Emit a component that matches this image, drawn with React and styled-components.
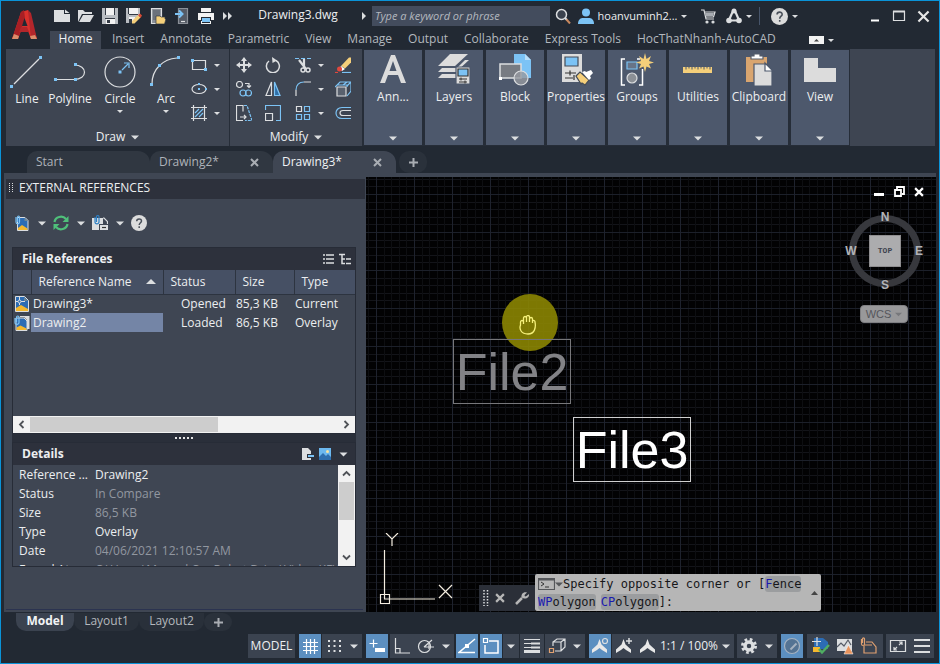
import React from "react";
import styled, { createGlobalStyle, css } from "styled-components";

const W = "#dcdee0";
const B = "#7cc3f5";
const Y = "#f5cf7a";
const DARK = "#222933";
const PANEL = "#3f4653";

const Global = createGlobalStyle`
  * { box-sizing: border-box; }
  body { margin: 0; background: ${DARK}; font: 12px/16px "Open Sans", "Noto Sans", sans-serif; color: #eceef0; }
  button, input { font: inherit; color: inherit; }
  table { border-collapse: collapse; border-spacing: 0; }
  svg { display: block; flex: none; }
`;

const Window = styled.div`
  display: flex;
  flex-direction: column;
  min-height: 100vh;
  min-width: 900px;
  border: 1px solid #0a93d8;
  background: ${DARK};
`;
const Button = styled.button`
  display: flex;
  align-items: center;
  justify-content: center;
  gap: 4px;
  flex: none;
  padding: 0;
  border: 0;
  background: none;
  white-space: nowrap;
`;

/* Icons */
const Svg = ({ s = 16, w = s, vb = 16, children }) => (
  <svg width={w} height={s} viewBox={typeof vb === "string" ? vb : `0 0 ${vb} ${vb}`} fill="none" stroke={W} strokeWidth="1.2" aria-hidden="true">
    {children}
  </svg>
);
const Caret = ({ w = 8, c = W }) => (
  <svg width={w} height="5" viewBox="0 0 8 5" aria-hidden="true"><path d="M0 0.5h8L4 4.5z" fill={c} /></svg>
);
const Small = () => <Caret w={6} />;
const Cross = ({ s = 9, c = "#a9adb3", w = 2 }) => (
  <svg width={s} height={s} viewBox="0 0 9 9" aria-hidden="true"><path d="M1 1l7 7M8 1l-7 7" stroke={c} strokeWidth={w} /></svg>
);
const Help = ({ s = 17 }) => (
  <Svg s={s}>
    <circle cx="8" cy="8" r="8" fill="#dcdcdc" stroke="none" />
    <path d="M5.7 6.2c0-3 4.8-3 4.8-.2 0 1.7-2.3 1.8-2.3 4M8.2 11.3v1.6" stroke="#4a505a" strokeWidth="1.5" />
  </Svg>
);
const DwgIcon = ({ clip }) => (
  <Svg>
    {clip ? (
      <g>
        <path d="M6 1h9.500v13H13V5l-3-3H6z" fill={W} stroke="none" />
        <path d="M2 3h8l3 3v9.500H2z" fill="#2c6cb4" strokeWidth="1" />
        <path d="M2.500 15v-2.500l4-2 6 3V15z" fill="#f4b82e" stroke="none" />
        <path d="M1 3v4.500c0 2.500 4 2.500 4 0V2.500c0-2-2.500-2-2.500 0V7" stroke={B} />
      </g>
    ) : (
      <g>
        <path d="M1.500.500h9l4 4v11h-13z" fill="#2c6cb4" strokeWidth="1" />
        <path d="M10 1v4h4z" fill="#6f8796" stroke="none" />
        <path d="M2 15v-3l5-3 7 4v2z" fill="#f4b82e" stroke="none" />
        <path d="M5.500 1v8M2 5.500h9" strokeWidth="1" />
        <circle cx="5.500" cy="5.500" r="1.500" fill="#2c6cb4" strokeWidth="1" />
      </g>
    )}
  </Svg>
);

const quick = [
  ["New", <path key="a" d="M0 2h10v4h6v8H0zM11 1.500l4.500 3.500H11z" fill={W} stroke="none" />],
  ["Open", <g key="a" stroke="none" fill={W}><path d="M0 14V2h5l2 2h7v2H4z" /><path d="M5 7h11l-4 7H1z" /></g>],
  ["Save", <g key="a" stroke="none"><path d="M0 0h16v16H0z" fill="#b9bdc2" /><path d="M3 0h10v7H3zM4 10h9v6H4z" fill="#f2f2f2" /><path d="M3 0h1v7H3zM12 0h1v7h-1zM3 10h10v1H3zM5 12h3v3H5z" fill="#333a44" /></g>],
  ["Save As", <g key="a" stroke="none"><path d="M0 0h14v8l-7 7H0z" fill="#b9bdc2" /><path d="M3 0h9v6H3zM3 9h6v5H3z" fill="#f2f2f2" /><path d="M2 0h1v6H2zM3 6h9v1H3zM3 11h3v4H3z" fill="#333a44" /><path d="M6 13l6-6 2.500 2.500-6 6H6z" fill={Y} /><path d="M12 7l2-1.500 2 2L14.500 10z" fill="#d94b35" /></g>],
  ["Open from mobile", <g key="a"><path d="M1.500.500h10v15h-10z" fill="#8a8f97" /><path d="M3 2h7v10H3z" fill="#6b717b" stroke="none" /><path d="M6 16V8h4l1 1h4v2h1l-1.500 5z" fill={Y} stroke="#333a44" strokeWidth=".7" /></g>],
  ["Save to mobile", <g key="a"><path d="M4.500.500h9v15h-9z" stroke="#8a8f97" fill="#555b66" /><path d="M7 13.500h4" /><path d="M1 6h6M5 2.500L8.500 6 5 9.500" stroke={B} strokeWidth="2" /></g>],
  ["Plot", <g key="a" stroke="none" fill="#f2f2f2"><path d="M3 0h10v4H3zM0 5h16v7h-3V9H3v3H0z" /><path d="M4 10h8v4H4z" fill={B} /><path d="M3 13h1v3H3zM12 13h1v3h-1zM4 15h8v1H4z" /></g>],
];

const draw = {
  Line: <g><path d="M4 29L29 4" /><path d="M0 30h3v3H0zM29 1h3v3h-3z" fill={B} stroke="none" /></g>,
  Polyline: <g><path d="M3 24.500h18M21 10c14 0 14 14.500 0 14.500" /><path d="M1 23h3v3H1zM21 23h3v3h-3zM21 8h3v3h-3z" fill={B} stroke="none" /></g>,
  Circle: <g><circle cx="17" cy="17" r="15" /><path d="M19 15l6-6M21 8h5v5" stroke={B} /><path d="M15.500 15.500h3v3h-3z" fill={B} stroke="none" /></g>,
  Arc: <g><path d="M3 29C3 14 14 4 28 3" /><path d="M1 28h3v3H1zM9 9h3v3H9zM28 1h3v3h-3z" fill={B} stroke="none" /></g>,
};
const drawSmall = [
  ["Rectangle", <g key="a"><path d="M1.500 3.500h13v9h-13z" /><path d="M0 2h3v3H0zM13 11h3v3h-3z" fill={B} stroke="none" /></g>],
  ["Ellipse", <g key="a"><ellipse cx="8" cy="8" rx="7" ry="4.500" /><path d="M7 2h2v2H7zM7 7h2v2H7zM14 7h2v2h-2z" fill={B} stroke="none" /></g>],
  ["Hatch", <g key="a"><path d="M2.500 0v16M13.500 0v16M0 2.500h16M0 13.500h16" /><path d="M4 8l4-4M4 12l8-8M8 12l4-4" stroke={B} /></g>],
];
const modify = [
  [["Move", <g key="a"><path d="M8 2v12M2 8h12" strokeWidth="2" /><path d="M8 0l3 4H5zM8 16l3-4H5zM0 8l4-3v6zM16 8l-4-3v6z" fill={W} stroke="none" /></g>],
   ["Rotate", <g key="a"><path d="M11 3.500A6.500 6.500 0 1 1 4 4" strokeWidth="1.500" /><path d="M7 0l5 3.500L7.500 6z" fill={W} stroke="none" /></g>],
   ["Trim", <g key="a"><path d="M0 1.500h16" stroke={B} strokeDasharray="4 2" /><path d="M4 3l7 9M9 2v9" strokeWidth="2.200" /><circle cx="13" cy="13" r="2" strokeWidth="1.500" /><circle cx="8" cy="13" r="2" strokeWidth="1.500" /></g>],
   ["Erase", <g key="a"><path d="M6 9l8-8.500h2v5l-6 6z" fill={Y} stroke="none" /><path d="M6 9l4 3-3 2-3-2z" fill="#fff" stroke="none" /><circle cx="4.500" cy="12" r="2.500" fill="#e0483e" stroke="none" /><path d="M0 15.500h3" stroke="#e0483e" /><path d="M7 15.500h9" stroke={B} /></g>]],
  [["Copy", <g key="a"><circle cx="3.500" cy="3.500" r="3" /><path d="M9 2.500h4v4M11 4.500l2 2 2-2" /><circle cx="7" cy="12" r="3" stroke={B} /><circle cx="12.500" cy="12" r="3" stroke={B} /></g>],
   ["Mirror", <g key="a"><path d="M6.500 1v13.500H1z" /><path d="M9.500 1v13.500H15z" stroke={B} fill="#2f6fa8" /></g>],
   ["Fillet", <g key="a"><path d="M1 15V9M9 1h7" /><path d="M1 9C1 4 4 1 9 1" stroke={B} /></g>],
   ["Explode", <g key="a"><path d="M2 6h9v9H2z" fill="#59616e" /><path d="M0 6l5-5h11l-4 4M12 15l4-5V2M2 4h10v2M8 4l4-3" stroke={B} /></g>]],
  [["Stretch", <g key="a"><path d="M7 15.500H.500V.500H7v6M4 12h6M8 10l2 2-2 2" /><path d="M8 .500h3l5 15H9" stroke={B} strokeDasharray="3 1" /></g>],
   ["Scale", <g key="a"><path d="M.500 5V.500h15v15H11" stroke={B} /><path d="M.500 8.500h7v7h-7z" /></g>],
   ["Array", <g key="a"><path d="M1.500 1.500h5v5h-5z" /><path d="M9.500 1.500h5v5h-5zM1.500 9.500h5v5h-5zM9.500 9.500h5v5h-5z" stroke={B} /></g>],
   ["Offset", <g key="a"><path d="M16 2.500H7c-8 0-8 11 0 11h9" stroke={B} /><path d="M16 5.500H8c-4 0-4 5 0 5h8" /></g>]],
];
const tiles = [
  ["Ann...", <path key="a" d="M5 31L16 3h4l11 28h-5l-3-8H13l-3 8zM14.500 19h7L18 9z" fill="#dcdcdc" stroke="none" />],
  ["Layers", <g key="a" stroke="none" fill="#dcdcdc"><path d="M2 14L14 2h18L19 14zM2 20l4-4h15l8-8h4L20 20zM2 26l4-4h14v4z" /><path d="M20 15h14v17H20z" stroke="#4d586c" /><path d="M22 17h10v7H22z" fill={B} stroke="#333" /><path d="M23 27h8M23 30h8M25 25.500v3M29 28.500v3" stroke="#333" strokeWidth="1" /></g>],
  ["Block", <g key="a"><path d="M17 2h11l6 6v18H17z" fill={B} stroke="none" /><path d="M28 2v6h6" fill="#b9def8" stroke="none" /><path d="M3 12h21v14H3z" fill="#777b82" strokeWidth="1.500" /><circle cx="24" cy="26" r="7" fill="#969aa0" fillOpacity=".8" /><path d="M2 25h3v3H2z" fill="#fff" stroke="none" /></g>],
  ["Properties", <g key="a"><path d="M4 2h20v28H4z" fill="#dcdcdc" stroke="none" /><path d="M7 5h13v9H7z" fill={B} stroke="#444b57" /><path d="M7 21h11M7 26h8M12 18.500v5M16 23v5" stroke="#333" /><path d="M18 24l4-4 9 8-4 5-3-2-1 1z" fill={Y} stroke="#444b57" /><path d="M24 20l3-1 1 1 5-2 2 3-3 3 1 2-2 2z" fill="#fff" stroke="none" /></g>],
  ["Groups", <g key="a"><path d="M6 7H2.500v26H6M18 7h3M20 33h3.500V17" stroke="#fff" strokeWidth="1.500" /><path d="M8 10h10v7H8z" stroke={B} fill="#687487" /><circle cx="13" cy="26" r="5" fill="#8c9096" /><path d="M26 1l1.500 6L32 4l-2 5 5 1.500-5 1.500 2 4.500-4.500-2L26 20l-1.500-5.500-4.500 2 2-4.500-5-1.500 5-1.500-2-5 4.500 3z" fill={Y} stroke="none" /></g>],
  ["Utilities", <g key="a"><path d="M3 15h29v6H3z" fill={Y} stroke="none" /><path d="M6 14.500v3M9 14.500v2M12 14.500v3M15 14.500v2M18 14.500v3M21 14.500v2M24 14.500v3M27 14.500v2M30 14.500v3" stroke="#4d586c" strokeWidth="1" /></g>],
  ["Clipboard", <g key="a" stroke="none"><path d="M5 5h21v25H5z" fill="#d9a56f" /><path d="M10 7V4h3V2h6v2h3v3z" fill="#fff" stroke="#555d6b" /><path d="M13 12h12l6 6v16H13z" fill="#dcdcdc" stroke="#4d586c" /><path d="M24 11v8h8z" fill="#fff" stroke="#4d586c" /></g>],
  ["View", <path key="a" d="M2 6h14v10h18v14H2z" fill="#dcdcdc" stroke="none" />],
];

/* Header */
const Header = styled.header`display: flex;`;
const LogoButton = styled(Button)`width: 49px; padding: 0 2px 0 0;`;
const HeaderBody = styled.div`flex: 1; min-width: 0;`;
const TitleBar = styled.div`
  display: flex;
  align-items: center;
  height: 30px;
  padding-right: 4px;
`;
const ToolButton = styled(Button)`width: ${(p) => p.$w || 24}px; height: 24px;`;
const DocTitle = styled.h1`
  flex: none; width: 120px; height: 18px; margin: 0; font-size: 12px; line-height: 16px; font-weight: 400; text-align: center;
`;
const SearchInput = styled.input`
  flex: 0 1 178px;
  min-width: 80px;
  height: 20px;
  margin: 0 2px;
  padding: 0 3px 2px;
  border: 0;
  background: #434c5d;
  font-size: 11px;
  font-style: italic;
  &::placeholder { color: #b4b8bf; opacity: 1; }
`;
const Rule = styled.span`width: 1px; height: 18px; margin: 0 6px; background: #46546a;`;
const Spacer = styled.span`flex: 1;`;
const Account = styled(Button)`width: 117px; font-size: 11px;`;
const MenuTabs = styled.nav`display: flex; height: 18px; align-items: center;`;
const MenuTab = styled(Button)`
  height: 18px;
  padding: 0 8px 2px;
  color: #b3b8be;
  ${(p) => p.$active && css`background: ${PANEL}; color: #f0f2f4; width: 51px; margin-right: 3px;`}
`;
const Collapse = styled(Button)`margin-left: 20px; width: 36px;`;

/* Ribbon */
const Ribbon = styled.section`
  display: flex;
  height: 97px;
  gap: 1px;
  margin: 0 4px 5px 5px;
  background: #262d38;
`;
const Group = styled.div`
  display: flex;
  flex-direction: column;
  flex: ${(p) => (p.$w ? "none" : 1)};
  width: ${(p) => p.$w || 0}px;
  background: #3e4552;
`;
const GroupTools = styled.div`display: flex; flex: 1; padding-top: 4px;`;
const GroupName = styled(Button)`height: 18px; gap: 6px;`;
const BigTool = styled(Button)`
  flex-direction: column;
  justify-content: flex-start;
  gap: 2px;
  width: ${(p) => p.$w}px;
  height: 64px;
  padding-top: 2px;
`;
const DrawGrid = styled.div`
  display: grid;
  grid-template: repeat(3, 24px) / 24px 12px;
  margin-left: 3px;
`;
const ModifyGrid = styled.div`
  display: grid;
  grid-template: repeat(3, 24px) / 28px 30px 30px 6px 38px;
`;
const GridButton = styled(Button)`width: 100%; height: 24px;`;
const Tiles = styled.div`display: flex; gap: 3px; padding: 1px 0 1px 1px;`;
const Tile = styled(Button)`
  flex-direction: column;
  justify-content: flex-start;
  gap: 1px;
  width: 58px;
  padding: 2px 0 4px;
  background: #4d586c;
  & > :last-child { margin-top: auto; }
`;

/* Document tabs */
const DocTabs = styled.div`
  display: flex;
  height: 26px;
  margin: 0 3px;
  padding-left: 23px;
  border-bottom: 4px solid ${PANEL};
`;
const DocTab = styled.div`
  display: flex;
  align-items: center;
  width: 123px;
  padding: 0 14px 0 9px;
  border-radius: 10px 12px 0 0;
  background: ${(p) => (p.$active ? PANEL : "#303741")};
  color: ${(p) => (p.$active ? "#f0f2f4" : "#aeb3b9")};
  & > :first-child { margin-right: auto; }
`;
const AddTab = styled(Button)`
  width: 28px;
  height: ${(p) => p.$h}px;
  margin-left: ${(p) => p.$gap || 0}px;
  border-radius: 10px;
  background: #2a313b;
`;

/* Main area */
const Main = styled.main`display: flex; flex: 1; margin: 0 3px;`;
const Dock = styled.aside`
  display: flex;
  flex-direction: column;
  width: 362px;
  flex: none;
  padding-top: 2px;
  background: ${PANEL};
`;
const DockTitle = styled.h2`
  display: flex;
  align-items: center;
  gap: 6px;
  height: 20px;
  margin: 0 1px 0 2px;
  padding: 0 0 2px 3px;
  background: #2d313c;
  font-size: 12px;
  font-weight: 400;
`;
const DockTools = styled.div`display: flex; align-items: center; height: 48px; padding-left: 6px;`;
const Box = styled.section`
  display: flex;
  flex-direction: column;
  flex: ${(p) => (p.$fill ? 1 : "none")};
  margin: 0 10px 0 8px;
  border: 1px solid #272c37;
`;
const BoxHeader = styled.div`
  display: flex;
  align-items: center;
  height: 22px;
  padding: 0 2px 0 9px;
  background: #2d313c;
`;
const BoxTitle = styled.h3`flex: 1; margin: 0; padding-bottom: 1px; font-size: 12px; font-weight: 700;`;
const RefTable = styled.table`
  width: 100%;
  table-layout: fixed;
  text-align: left;
  white-space: nowrap;
`;
const Th = styled.th`
  width: ${(p) => p.$w}px;
  height: 24px;
  padding: 0 0 0 7px;
  background: #465064;
  border-right: 1px solid #2d3440;
  border-bottom: 1px solid #2d3440;
  font-weight: 400;
  &:last-child { border-right: 0; }
`;
const SortButton = styled(Button)`width: 100%; justify-content: space-between; padding-right: 7px;`;
const Td = styled.td`
  height: 19px;
  padding: 0 0 0 ${(p) => p.$pad || 2}px;
  line-height: 16px;
  background: ${(p) => (p.$selected ? "#7485a6" : "transparent")};
`;
const HScroll = styled.div`
  display: flex;
  height: 17px;
  margin-top: auto;
  background: #f2f2f2;
`;
const VScroll = styled.div`
  display: flex;
  flex-direction: column;
  width: 17px;
  background: #f2f2f2;
`;
const ScrollButton = styled(Button)`width: 17px; height: 17px;`;
const Thumb = styled.div`
  background: #cdcdcd;
  ${(p) => (p.$vertical ? css`height: 38px; margin: 0 1px;` : css`width: 55%; margin: 1px 0;`)}
`;
const Splitter = styled.div`
  display: flex;
  align-items: center;
  justify-content: center;
  gap: 2px;
  height: 8px;
  margin: 0 10px 0 8px;
  background: #2a2f3a;
`;
const Dot = styled.i`width: 2px; height: 2px; background: #e4e4e4;`;
const DetailsBody = styled.div`display: flex; height: 101px; overflow: hidden;`;
const DetailsScroll = styled.div`flex: 1; min-width: 0; overflow: hidden;`;
const DetailsTable = styled.table`width: 100%; table-layout: fixed; text-align: left; white-space: nowrap;`;
const DetailName = styled.th`width: 76px; height: 19px; padding: 0 0 0 6px; font-weight: 400;`;
const DetailValue = styled.td`
  height: 19px; padding: 0 0 0 6px; overflow: hidden;
  color: ${(p) => (p.$muted ? "#9297a0" : "#eceef0")};
`;
const DockFoot = styled.div`height: 43px; margin: 0 3px 2px 2px; border-bottom: 1px solid #2b3350;`;

/* Drawing canvas */
const vline = (x, c) => `linear-gradient(90deg, transparent ${x}px, ${c} ${x}px ${x + 1}px, transparent ${x + 1}px)`;
const hline = (y, c) => `linear-gradient(transparent ${y}px, ${c} ${y}px ${y + 1}px, transparent ${y + 1}px)`;
const Canvas = styled.section`
  position: relative;
  flex: 1;
  min-height: 435px;
  overflow: hidden;
  background-color: #020203;
  background-image: ${[
    vline(10, "#1e222d"), hline(17, "#1c202a"),
    ...[2, 18, 25, 33].map((x) => vline(x, "#0d0e11")),
    ...[2, 9, 25, 32].map((y) => hline(y, "#131419")),
  ].join(",")};
  background-size: 38px 38px;
`;
const TextFrame = styled.div`
  position: absolute;
  left: ${(p) => p.$x}px;
  top: ${(p) => p.$y}px;
  width: 118px;
  height: 65px;
  border: 1px solid ${(p) => p.$line};
  color: ${(p) => p.$c};
  font: 52px/64px "Liberation Sans", Arial, sans-serif;
  text-align: center;
  white-space: nowrap;
`;
const PanCursor = styled.div`
  position: absolute;
  left: 136px;
  top: 117px;
  width: 56px;
  height: 57px;
  padding: 21px 0 0 17px;
  border-radius: 50%;
  background: rgba(142, 137, 2, 0.88);
`;
const ViewButtons = styled.div`position: absolute; top: 3px; right: 7px; display: flex;`;
const Compass = styled.div`
  position: absolute;
  top: 34px;
  right: 11px;
  width: 80px;
  height: 80px;
  display: grid;
  grid-template: 12px 1fr 12px / 12px 1fr 12px;
  place-items: center;
  color: #b2b3b7;
  font: bold 12px/12px "Liberation Sans", Arial, sans-serif;
  & > b:nth-of-type(1) { grid-area: 1 / 2; }
  & > b:nth-of-type(2) { grid-area: 2 / 1; }
  & > b:nth-of-type(3) { grid-area: 2 / 3; }
  & > b:nth-of-type(4) { grid-area: 3 / 2; }
  &::before {
    content: "";
    position: absolute;
    inset: 4px;
    border: 7px solid #37383d;
    border-radius: 50%;
  }
  & > * { position: relative; }
`;
const Cube = styled(Button)`
  grid-area: 2 / 2;
  width: 32px;
  height: 32px;
  border: 1px solid #8f8e90;
  background: #acacae;
  color: #3f4350;
  font: bold 8px/10px "Liberation Mono", monospace;
`;
const Wcs = styled(Button)`
  position: absolute;
  top: 128px;
  right: 28px;
  width: 48px;
  height: 18px;
  border: 1px solid #7f7f82;
  border-radius: 4px;
  background: #98989a;
  color: #55565c;
  font: 11px/14px "Liberation Sans", Arial, sans-serif;
`;
const Ucs = styled.div`position: absolute; left: 13px; bottom: 3px;`;
const Command = styled.div`
  position: absolute;
  left: 113px;
  bottom: 1px;
  display: flex;
  align-items: flex-end;
`;
const CommandTools = styled.div`
  display: flex;
  align-items: center;
  gap: 2px;
  width: 56px;
  height: 26px;
  padding: 0 4px;
  background: #2b2f38;
`;
const Prompt = styled.div`
  display: flex;
  align-items: center;
  width: 286px;
  height: 37px;
  padding: 1px 3px 0;
  border-radius: 2px;
  background: #b6b6b6;
  color: #17171a;
  font: 12px/18px "DejaVu Sans Mono", monospace;
  white-space: nowrap;
`;
const PromptText = styled.div`flex: 1;`;
const PromptRow = styled.div`display: flex; align-items: center;`;
const Option = styled(Button)`
  display: inline-block;
  margin-right: ${(p) => (p.$gap ? 5 : 0)}px;
  border-radius: 3px;
  background: #9b9d9f;
  line-height: 16px;
  & > b { font-weight: 400; color: #1a1ab0; }
`;

/* Footer */
const Footer = styled.footer`padding: 1px 4px 5px;`;
const LayoutTabs = styled.div`display: flex; height: 19px; padding-left: 11px;`;
const LayoutTab = styled(Button)`
  height: 18px;
  width: ${(p) => (p.$active ? 58 : 65)}px;
  padding-bottom: 2px;
  border-radius: 0 0 10px 10px;
  background: ${(p) => (p.$active ? "#3b4350" : "#29303a")};
  color: ${(p) => (p.$active ? "#f2f4f5" : "#b4b8bd")};
  font-weight: ${(p) => (p.$active ? 700 : 400)};
`;
const StatusBar = styled.div`
  display: flex;
  justify-content: flex-end;
  gap: 3px;
  height: 24px;
  margin-top: 2px;
  padding-right: 1px;
`;
const StatusSet = styled.div`display: flex; gap: 1px;`;
const StatusGroup = styled.div`display: flex; background: #3b4350; padding: 0 ${(p) => p.$pad || 0}px;`;
const StatusButton = styled(Button)`
  width: ${(p) => p.$w || 24}px;
  height: 24px;
  border: solid transparent;
  border-width: 0 1px;
  background: ${(p) => (p.$on ? "#5c8fc0" : "transparent")};
  ${(p) => p.$on && css`border-color: ${DARK};`}
`;
const MenuButton = styled(Button)`width: ${(p) => p.$w || 16}px; height: 24px;`;

const Status = ({ label, on, menu, w, children }) => (
  <>
    <StatusButton aria-label={label} aria-pressed={!!on} $on={on} $w={w}>
      <Svg s={18} vb={18}>{children}</Svg>
    </StatusButton>
    {menu && <MenuButton aria-label={`${label} options`}><Caret /></MenuButton>}
  </>
);
const scaleMan = <path d="M8.500 2l2 5.500 5.500 5V16l-5-3-2.500-2L6 13l-5 3v-3.500l5.500-5z" fill="#e8e8e8" stroke="none" />;

const references = [
  { name: "Drawing3*", status: "Opened", size: "85,3 KB", type: "Current" },
  { name: "Drawing2", status: "Loaded", size: "86,5 KB", type: "Overlay", selected: true },
];
const details = [
  ["Reference ...", "Drawing2"],
  ["Status", "In Compare", true],
  ["Size", "86,5 KB", true],
  ["Type", "Overlay"],
  ["Date", "04/06/2021 12:10:57 AM", true],
  ["Found At", "C:\\Users\\Manual Car Robot Drive\\Video KEYF", true],
];

const Chevron = ({ d }) => <Svg s={9} vb={9}><path d={d} stroke="#505358" strokeWidth="1.8" /></Svg>;

function TopHeader() {
  return (
    <Header>
      <LogoButton aria-label="Application menu">
        <svg width="28" height="32" viewBox="0 0 28 32" aria-hidden="true">
          <path d="M1 30L10 3l7-2 9 29h-6l-3-8h-7l-3 8z" fill="#d9312c" />
          <path d="M10 3l3-2 1 8-7 21H1z" fill="#a81f24" />
          <path d="M10 18h6l2 5H8zM17 1l3 3 6 26-6 0z" fill="#b3262b" />
          <path d="M11 17l2.500-8 3 8z" fill={DARK} />
          <path d="M1 30l2-5 5 2-1 3zM20 30l-1-3 5-1 2 4z" fill="#dc8d6b" />
        </svg>
      </LogoButton>
      <HeaderBody>
        <TitleBar>
          {quick.map(([n, icon]) => <ToolButton key={n} aria-label={n}><Svg>{icon}</Svg></ToolButton>)}
          <ToolButton $w={20} aria-label="More tools"><Svg s={10} vb={10}><path d="M0 1l4 4-4 4zM5 1l4 4-4 4z" fill={W} stroke="none" /></Svg></ToolButton>
          <DocTitle>Drawing3.dwg</DocTitle>
          <ToolButton $w={12} aria-label="Expand search"><Svg s={8} vb={8}><path d="M2 0l4 4-4 4z" fill={W} stroke="none" /></Svg></ToolButton>
          <SearchInput aria-label="Search" placeholder="Type a keyword or phrase" />
          <ToolButton $w={22} aria-label="Search"><Svg><circle cx="6.500" cy="6.500" r="5" strokeWidth="1.500" fill="#3b424e" /><path d="M10 10l2 2" strokeWidth="2" /><path d="M11.500 11.500l3.500 4" stroke="#c9885e" strokeWidth="2" /></Svg></ToolButton>
          <Account>
            <Svg><circle cx="8" cy="4.500" r="4" fill={B} stroke="none" /><path d="M0 16c0-5 3-6 5-6h6c2 0 5 1 5 6z" fill={B} stroke="none" /></Svg>
            <span>hoanvuminh2...</span>
            <Small />
          </Account>
          <ToolButton $w={34} aria-label="Store"><Svg><path d="M1 2h3l2 9h8M4.500 4H15l-1.500 5H6" /><path d="M5 5h9l-1 3H6z" fill="#a8acb2" stroke="none" /><circle cx="7" cy="14" r="1" fill={W} /><circle cx="13" cy="14" r="1" fill={W} /></Svg></ToolButton>
          <ToolButton $w={28} aria-label="Autodesk apps">
            <Svg><path d="M7 3L3 12M9 3l4 9M3 12.500h10" strokeWidth="2.200" /><circle cx="8" cy="3" r="2.500" fill={W} stroke="none" /><circle cx="3" cy="12.500" r="2.800" fill={W} stroke="none" /><circle cx="13" cy="12.500" r="2.800" fill={W} stroke="none" /></Svg>
            <Small />
          </ToolButton>
          <Rule />
          <ToolButton $w={36} aria-label="Help"><Help /><Small /></ToolButton>
          <Spacer />
          <ToolButton aria-label="Minimize"><Svg><path d="M4 12.500h8" stroke="#fff" strokeWidth="2" /></Svg></ToolButton>
          <ToolButton aria-label="Maximize"><Svg><path d="M2.500 3.500h11v9h-11z" /><path d="M2 3.500h12" strokeWidth="2" /></Svg></ToolButton>
          <ToolButton aria-label="Close"><Cross s={13} c="#e6e6e6" w={1.5} /></ToolButton>
        </TitleBar>
        <MenuTabs>
          {["Home", "Insert", "Annotate", "Parametric", "View", "Manage", "Output", "Collaborate", "Express Tools", "HocThatNhanh-AutoCAD"].map((t, i) => (
            <MenuTab key={t} $active={i === 0}>{t}</MenuTab>
          ))}
          <Collapse aria-label="Minimize ribbon">
            <Svg s={8} w={15} vb="0 0 15 8"><path d="M0 0h15v8H0z" fill="#f2f2f2" stroke="none" /><path d="M5 5.500h5L7.500 3z" fill="#444" stroke="none" /></Svg>
            <Small />
          </Collapse>
        </MenuTabs>
      </HeaderBody>
    </Header>
  );
}

const bigWidths = { Line: 42, Polyline: 44, Circle: 56, Arc: 36 };

function RibbonBar() {
  return (
    <Ribbon>
      <Group $w={223}>
        <GroupTools>
          {Object.keys(draw).map((n) => (
            <BigTool key={n} $w={bigWidths[n]}>
              <Svg s={34} vb={34}>{draw[n]}</Svg>
              <span>{n}</span>
              {(n === "Circle" || n === "Arc") && <Small />}
            </BigTool>
          ))}
          <DrawGrid>
            {drawSmall.map(([n, icon]) => (
              <React.Fragment key={n}>
                <GridButton aria-label={n}><Svg>{icon}</Svg></GridButton>
                <GridButton aria-label={`${n} options`}><Small /></GridButton>
              </React.Fragment>
            ))}
          </DrawGrid>
        </GroupTools>
        <GroupName>Draw <Caret /></GroupName>
      </Group>
      <Group $w={132}>
        <GroupTools>
          <ModifyGrid>
            {modify.map((row) => row.map(([n, icon], i) => (
              <React.Fragment key={n}>
                <GridButton aria-label={n}><Svg>{icon}</Svg></GridButton>
                {i === 2 && <GridButton aria-label={`${n} options`}><Small /></GridButton>}
              </React.Fragment>
            )))}
          </ModifyGrid>
        </GroupTools>
        <GroupName>Modify <Caret /></GroupName>
      </Group>
      <Tiles>
        {tiles.map(([n, icon]) => (
          <Tile key={n}><Svg s={36} vb={36}>{icon}</Svg><span>{n}</span><Caret /></Tile>
        ))}
      </Tiles>
      <Group />
    </Ribbon>
  );
}

function ReferencesDock() {
  return (
    <Dock>
      <DockTitle>
        <Svg s={10} w={4} vb="0 0 4 10"><path d="M.500 0v10M3.500 0v10" strokeWidth="1" strokeDasharray="1 1" /></Svg>
        EXTERNAL REFERENCES
      </DockTitle>
      <DockTools>
        <ToolButton aria-label="Attach drawing">
          <Svg><path d="M3.500 2.500H11l3 3v10H3.500z" fill="#2c6cb4" strokeWidth="1" /><path d="M10.500 2.500v3.500H14z" fill="#6f8796" stroke="none" /><path d="M4 15v-2l4-3 5.500 3.500V15z" fill="#f4b82e" stroke="none" /><path d="M2 2v5c0 2.500 3.500 2.500 3.500 0V2.500c0-2-2-2-2 0V7" stroke={B} /></Svg>
        </ToolButton>
        <MenuButton $w={15} aria-label="Attach options"><Caret /></MenuButton>
        <ToolButton aria-label="Refresh">
          <Svg><path d="M1.500 7A6.500 6 0 0 1 13 4M14.500 9A6.500 6 0 0 1 3 12" stroke="#4fc07a" strokeWidth="2.200" /><path d="M15.500 1v6h-6zM.500 15V9h6z" fill="#4fc07a" stroke="none" /></Svg>
        </ToolButton>
        <MenuButton $w={15} aria-label="Refresh options"><Caret /></MenuButton>
        <ToolButton aria-label="Change path">
          <Svg><path d="M0 3h11v6H7v6H0zM8 10h8v5H8z" fill={W} stroke="none" /><path d="M10 12.500h4" stroke="#333" /><path d="M11 3h1l3.500 3.500V9" /><path d="M3 2v5c0 2.500 4 2.500 4 0V2c0-2-2.500-2-2.500 0v5" stroke="#2c7fc4" /></Svg>
        </ToolButton>
        <MenuButton $w={15} aria-label="Path options"><Caret /></MenuButton>
        <ToolButton aria-label="Help"><Help s={16} /></ToolButton>
      </DockTools>
      <Box $fill>
        <BoxHeader>
          <BoxTitle>File References</BoxTitle>
          <ToolButton $w={17} aria-label="List view"><Svg s={12} vb={12}><path d="M1 2h2M1 6h2M1 10h2M4 2h8M4 6h8M4 10h8" strokeWidth="1.500" /></Svg></ToolButton>
          <ToolButton $w={17} aria-label="Tree view"><Svg s={12} vb={12}><path d="M0 1.500h6M3 2v8.500h3M3 6h3M7 6h5M7 10.500h5" strokeWidth="1.500" /></Svg></ToolButton>
        </BoxHeader>
        <RefTable>
          <thead>
            <tr>
              <Th $w={18} aria-label="Kind" />
              <Th $w={132}><SortButton>Reference Name<Svg s={5} w={10} vb="0 0 10 5"><path d="M0 5h10L5 0z" fill={W} stroke="none" /></Svg></SortButton></Th>
              <Th $w={72}>Status</Th>
              <Th $w={59}>Size</Th>
              <Th>Type</Th>
            </tr>
          </thead>
          <tbody>
            {references.map((r) => (
              <tr key={r.name}>
                <Td $pad={1}><DwgIcon clip={r.selected} /></Td>
                <Td $selected={r.selected}>{r.name}</Td>
                <Td $pad={18}>{r.status}</Td>
                <Td $pad={1}>{r.size}</Td>
                <Td $pad={1}>{r.type}</Td>
              </tr>
            ))}
          </tbody>
        </RefTable>
        <HScroll>
          <ScrollButton aria-label="Scroll left"><Chevron d="M6.500 1L3 4.500 6.500 8" /></ScrollButton>
          <Thumb />
          <Spacer />
          <ScrollButton aria-label="Scroll right"><Chevron d="M2.500 1L6 4.500 2.500 8" /></ScrollButton>
        </HScroll>
      </Box>
      <Splitter>{[0, 1, 2, 3, 4].map((i) => <Dot key={i} />)}</Splitter>
      <Box>
        <BoxHeader>
          <BoxTitle>Details</BoxTitle>
          <ToolButton $w={17} aria-label="Details"><Svg s={12} vb={12}><path d="M0 0h6l3 3v3H5v4h4v2H0z" fill={W} stroke="none" /><path d="M6 8h6" stroke={B} strokeWidth="2" /></Svg></ToolButton>
          <ToolButton $w={17} aria-label="Preview"><Svg s={12} vb={12}><path d="M0 0h12v12H0z" fill="#6cb8ef" stroke="none" /><path d="M0 9l4-4 3 3 2-2 3 3v3H0z" fill="#2f6fae" stroke="none" /><circle cx="8.500" cy="3.500" r="1.500" fill="#f7e3a0" stroke="none" /></Svg></ToolButton>
          <ToolButton $w={20} aria-label="Collapse details"><Caret w={9} /></ToolButton>
        </BoxHeader>
        <DetailsBody>
          <DetailsScroll>
            <DetailsTable>
              <tbody>
                {details.map(([n, v, muted]) => (
                  <tr key={n}><DetailName scope="row">{n}</DetailName><DetailValue $muted={muted}>{v}</DetailValue></tr>
                ))}
              </tbody>
            </DetailsTable>
          </DetailsScroll>
          <VScroll>
            <ScrollButton aria-label="Scroll up"><Chevron d="M1 6.500L4.500 3 8 6.500" /></ScrollButton>
            <Thumb $vertical />
            <Spacer />
            <ScrollButton aria-label="Scroll down"><Chevron d="M1 2.500L4.500 6 8 2.500" /></ScrollButton>
          </VScroll>
        </DetailsBody>
      </Box>
      <DockFoot />
    </Dock>
  );
}

function DrawingCanvas() {
  return (
    <Canvas>
      <PanCursor>
        <Svg s={20} w={18} vb="0 0 18 20"><path d="M1.500 10.500V7c0-2 3-2 3 0v2M4.500 8V3c0-2 3-2 3 0v4M7.500 5V2c0-2 3-2 3 0v5M10.500 4c0-2 3-2 3 0v4M13.500 6.500c0-1.500 2.500-1.500 2.500.5 1 5 0 12-7 12s-9-5-7.500-9" stroke="#f5f07a" strokeWidth="1.300" /></Svg>
      </PanCursor>
      <TextFrame $x={87} $y={162} $c="#828286" $line="#77777a">File2</TextFrame>
      <TextFrame $x={207} $y={240} $c="#ffffff" $line="#d0d0d0">File3</TextFrame>
      <ViewButtons>
        <ToolButton $w={20} aria-label="Minimize drawing"><Svg s={12} vb={12}><path d="M1 8.500h10" stroke="#fff" strokeWidth="3" /></Svg></ToolButton>
        <ToolButton $w={20} aria-label="Restore drawing"><Svg s={12} vb={12}><path d="M2 4h6v6H2zM4 3V1h7v7H9" stroke="#fff" strokeWidth="1.800" /></Svg></ToolButton>
        <ToolButton $w={20} aria-label="Close drawing"><Cross s={10} c="#fff" w={2} /></ToolButton>
      </ViewButtons>
      <Compass><b>N</b><b>W</b><Cube>TOP</Cube><b>E</b><b>S</b></Compass>
      <Wcs>WCS <Caret w={7} c="#77787c" /></Wcs>
      <Ucs>
        <svg width="75" height="76" viewBox="0 0 75 76" fill="none" stroke="#f4ede0" aria-hidden="true">
          <path d="M1.500 61.500h9v9h-9zM5.500 17v49H56M7 0l6 6 6-6M13 6v7M60 52l13 13M73 52L60 65" strokeWidth="1.200" />
        </svg>
      </Ucs>
      <Command>
        <CommandTools>
          <Svg s={16} w={6} vb="0 0 6 16"><path d="M1 0v16M4.500 0v16" strokeWidth="1.500" strokeDasharray="1.500 1.500" /></Svg>
          <ToolButton $w={18} aria-label="Close command line"><Cross s={10} c="#b6b6b6" /></ToolButton>
          <ToolButton $w={22} aria-label="Customize">
            <Svg><path d="M2 14l6-6" strokeWidth="2.500" stroke="#b6b6b6" /><path d="M13 2.500L10.500 5l.5 1.500 1.500-.500L15 4c.5 3-2 5-5 4.500L7.500 7.500C7 4.500 9 1.500 13 2.500z" fill="#b6b6b6" stroke="none" /></Svg>
          </ToolButton>
        </CommandTools>
        <Prompt>
          <PromptText>
            <PromptRow>
              <Svg s={12} w={17} vb="0 0 17 12"><path d="M.500.500h16v11H.500z" stroke="#55575a" /><path d="M0 1.500h17" stroke="#55575a" strokeWidth="2" /><path d="M3 4l3 2-3 2M7 9h4" stroke="#333" strokeWidth="1" /></Svg>
              <Caret c="#55575a" />
              <span>Specify opposite corner or [</span>
              <Option><b>F</b>ence</Option>
            </PromptRow>
            <PromptRow>
              <Option $gap><b>WP</b>olygon</Option>
              <Option><b>CP</b>olygon</Option>
              <span>]:</span>
            </PromptRow>
          </PromptText>
          <Button aria-label="Command history"><Svg s={4} w={7} vb="0 0 7 4"><path d="M0 4h7L3.500 0z" fill="#444" stroke="none" /></Svg></Button>
        </Prompt>
      </Command>
    </Canvas>
  );
}

function StatusFooter() {
  return (
    <Footer>
      <LayoutTabs>
        <LayoutTab $active>Model</LayoutTab>
        <LayoutTab>Layout1</LayoutTab>
        <LayoutTab>Layout2</LayoutTab>
        <AddTab $h={18} aria-label="New layout"><Svg s={9} vb={9}><path d="M4.500 0v9M0 4.500h9" stroke="#a9adb3" strokeWidth="2" /></Svg></AddTab>
      </LayoutTabs>
      <StatusBar>
        <StatusGroup><StatusButton $w={47}>MODEL</StatusButton></StatusGroup>
        <StatusGroup>
          <Status label="Grid" on><path d="M5.500 2v15M9.500 2v15M13.500 2v15M2 5.500h15M2 9.500h15M2 13.500h15" stroke="#fff" /></Status>
          <Status label="Snap" menu><path d="M3 4h14M3 9h14M3 14h14" strokeWidth="2" strokeDasharray="2 3.500" /></Status>
        </StatusGroup>
        <StatusSet>
          <StatusGroup><Status label="Dynamic input" on><path d="M1.500 6.500h8M5.500 2.500v8" stroke="#fff" /><path d="M7 11h10v4H7z" fill="#fff" stroke="none" /></Status></StatusGroup>
          <StatusGroup>
            <Status label="Ortho"><path d="M2.500 1v15H17M2.500 11.500H7V16" /></Status>
            <Status label="Polar tracking" menu><circle cx="7.500" cy="9.500" r="6" /><path d="M7 10l8-7M7 10h10M12 7v5" /></Status>
          </StatusGroup>
          <StatusGroup>
            <Status label="Object snap tracking" on><path d="M17 2L1 15.500h16" stroke="#fff" strokeWidth="1.500" /><path d="M7 7h4v4H7z" fill="#fff" stroke="none" /></Status>
            <Status label="Object snap" on menu><path d="M7 4h9v12H3V8" stroke="#fff" strokeWidth="1.500" /><path d="M1.500 1.500h4v4h-4z" stroke="#fff" /></Status>
          </StatusGroup>
          <StatusGroup><Status label="Lineweight"><path d="M1 2.500h16M1 6.500h7M1 10.500h7" /><path d="M8 6.500h9M8 10.500h9" strokeWidth="2" /><path d="M1 14.500h16" strokeWidth="3" /></Status></StatusGroup>
          <StatusGroup><Status label="Selection cycling" menu><path d="M5 5l4-3h8v8l-4 4H7M5 9V5h8v9M13 5l4-3" /><path d="M1.500 11.500h4v4h-4z" stroke="#e0a070" /></Status></StatusGroup>
        </StatusSet>
        <StatusGroup>
          <Status label="Annotation visibility" on>{scaleMan}<circle cx="14" cy="4" r="2.500" /></Status>
          <Status label="Auto scale">{scaleMan}<path d="M14 1v6M11 4h6" strokeWidth="1.500" /></Status>
          <Status label="Annotation scale">{scaleMan}</Status>
          <StatusButton $w={58}>1:1 / 100%</StatusButton>
          <MenuButton aria-label="Scale list"><Caret /></MenuButton>
        </StatusGroup>
        <StatusGroup>
          <Status label="Workspace" menu><circle cx="9" cy="9" r="4" strokeWidth="3.500" /><circle cx="9" cy="9" r="6.500" strokeWidth="3" strokeDasharray="2.600 2.500" /></Status>
        </StatusGroup>
        <StatusGroup><Status label="Isolate objects" on><circle cx="9" cy="9" r="7.500" fill="#547393" stroke="#a5b2c0" /><path d="M7.500 12.500l6-6" stroke="#a5b2c0" strokeWidth="2" /></Status></StatusGroup>
        <StatusGroup $pad={2}>
          <Status label="Drawing status"><path d="M2 1h9l5 4v7H2z" fill="#2c6cb4" stroke="none" /><path d="M1 10h7v5H1z" fill="#f4b82e" stroke="none" /><path d="M5 0v9M0 4.500h9" /><path d="M7 12l3 3.500L17 8" stroke="#4fae62" strokeWidth="2.500" /></Status>
          <Status label="Graphics performance"><path d="M1 2h15v12H1z" fill={W} stroke="none" /><path d="M1 10l4-4 3 3 4-6 3 5" stroke="#555b66" /><path d="M12.500 8l4.500 9H8z" fill="#e8935c" stroke="#fff" strokeWidth=".5" /></Status>
          <Status label="External references"><path d="M6 5h6l4 5v6H4V9M4 8h8" stroke="#e0a070" /><path d="M1.500 2v5c0 2 3 2 3 0V2c0-1.500-2-1.500-2 0v4" stroke="#e0a070" /></Status>
        </StatusGroup>
        <StatusGroup>
          <Status label="Clean screen"><path d="M1.500 3.500h15v11h-15z" /><path d="M10 8l3-3M13 8V5h-3M8 10l-3 3M5 10v3h3" /></Status>
          <Status label="Customization"><path d="M1 3h16M1 9h16M1 15h16" strokeWidth="2" /></Status>
        </StatusGroup>
      </StatusBar>
    </Footer>
  );
}

export default function App() {
  return (
    <>
      <Global />
      <Window>
        <TopHeader />
        <RibbonBar />
        <DocTabs>
          <DocTab><Button>Start</Button></DocTab>
          <DocTab><Button>Drawing2*</Button><Button aria-label="Close Drawing2"><Cross /></Button></DocTab>
          <DocTab $active><Button>Drawing3*</Button><Button aria-label="Close Drawing3"><Cross /></Button></DocTab>
          <AddTab $h={22} $gap={3} aria-label="New drawing"><Svg s={9} vb={9}><path d="M4.500 0v9M0 4.500h9" stroke="#a9adb3" strokeWidth="2" /></Svg></AddTab>
        </DocTabs>
        <Main>
          <ReferencesDock />
          <DrawingCanvas />
        </Main>
        <StatusFooter />
      </Window>
    </>
  );
}
